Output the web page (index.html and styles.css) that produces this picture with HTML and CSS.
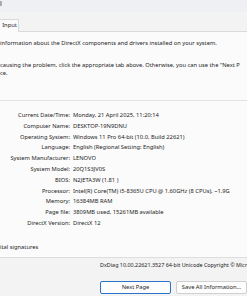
FILE: index.html
```html
<!DOCTYPE html>
<html lang="en">
<head>
    <meta charset="UTF-8">
    <meta name="viewport" content="width=device-width, initial-scale=1.0">
    <title>DirectX Diagnostic Tool</title>
    <link rel="stylesheet" href="styles.css">
</head>
<body>
    <div class="titlebar"><span class="title">l</span></div>

    <div class="tabs">
        <div class="tab active">Input</div>
    </div>

    <div class="panel">
        <div class="line">information about the DirectX components and drivers installed on your system.</div>
        <div class="line gap">causing the problem, click the appropriate tab above. Otherwise, you can use the "Next P</div>
        <div class="line">ce.</div>

        <div class="separator"></div>

        <div class="info">
            <div class="label">Current Date/Time:</div><div class="value">Monday, 21 April 2025, 11:20:14</div>
            <div class="label">Computer Name:</div><div class="value">DESKTOP-19N9DNU</div>
            <div class="label">Operating System:</div><div class="value">Windows 11 Pro 64-bit (10.0, Build 22621)</div>
            <div class="label">Language:</div><div class="value">English (Regional Setting: English)</div>
            <div class="label">System Manufacturer:</div><div class="value">LENOVO</div>
            <div class="label">System Model:</div><div class="value">20Q1S3JV0S</div>
            <div class="label">BIOS:</div><div class="value">N2JETA3W (1.81 )</div>
            <div class="label">Processor:</div><div class="value">Intel(R) Core(TM) i5-8365U CPU @ 1.60GHz (8 CPUs), ~1.9G</div>
            <div class="label">Memory:</div><div class="value">16384MB RAM</div>
            <div class="label">Page file:</div><div class="value">3809MB used, 15261MB available</div>
            <div class="label">DirectX Version:</div><div class="value">DirectX 12</div>
        </div>

        <div class="line check">ital signatures</div>
    </div>

    <div class="footer">
        <div class="version">DxDiag 10.00.22621.3527 64-bit Unicode Copyright © Micro</div>
        <div class="buttons">
            <button class="btn default">Next Page</button>
            <button class="btn">Save All Information...</button>
        </div>
    </div>
</body>
</html>
```

FILE: styles.css
```css
body {
    font-family: "Noto Sans", "Open Sans", sans-serif;
    font-size: 5.75px;
    color: #1b1b1b;
    background-color: #f3f3f3;
    margin: 0;
    padding: 0;
    width: 247px;
    height: 296px;
    overflow: hidden;
}
.titlebar {
    height: 12px;
    background-color: #eef0f3;
}
.title {
    display: block;
    font-size: 7px;
    line-height: 7px;
}
.tabs {
    height: 12px;
    padding-top: 7px;
    border-bottom: 1px solid #dadada;
    display: flex;
}
.tab {
    width: 17px;
    height: 11px;
    line-height: 11px;
    padding-left: 1px;
    text-align: center;
    border: 1px solid #dadada;
    border-left: none;
    border-bottom: none;
    background-color: #fbfbfb;
}
.tab.active {
    margin-bottom: -1px;
    height: 12px;
}
.panel {
    background-color: #fbfbfb;
    padding-top: 7px;
    padding-bottom: 6px;
    border-bottom: 1px solid #dedede;
}
.line {
    line-height: 8px;
    white-space: nowrap;
    overflow: hidden;
}
.line.gap {
    margin-top: 14px;
}
.separator {
    height: 1px;
    background-color: #e2e2e2;
    margin-top: 23px;
}
.info {
    display: grid;
    grid-template-columns: 70px 1fr;
    column-gap: 3px;
    grid-auto-rows: 10.8px;
    align-items: center;
    margin-top: 8.6px;
}
.label {
    text-align: right;
    white-space: nowrap;
}
.value {
    white-space: nowrap;
    overflow: hidden;
}
.line.check {
    margin-top: 14.6px;
}
.footer {
    padding-top: 3px;
}
.version {
    padding-left: 100px;
    font-size: 5.4px;
    line-height: 8px;
    white-space: nowrap;
    overflow: hidden;
}
.buttons {
    display: flex;
    gap: 5px;
    padding-left: 100px;
    margin-top: 12px;
}
.btn {
    flex: none;
    width: 71px;
    height: 13px;
    padding: 0;
    font-family: inherit;
    font-size: 5.75px;
    color: #1b1b1b;
    background-color: #fdfdfd;
    border: 1px solid #d0d0d0;
    border-radius: 2px;
}
.btn.default {
    border-color: #2b74c8;
}
```
